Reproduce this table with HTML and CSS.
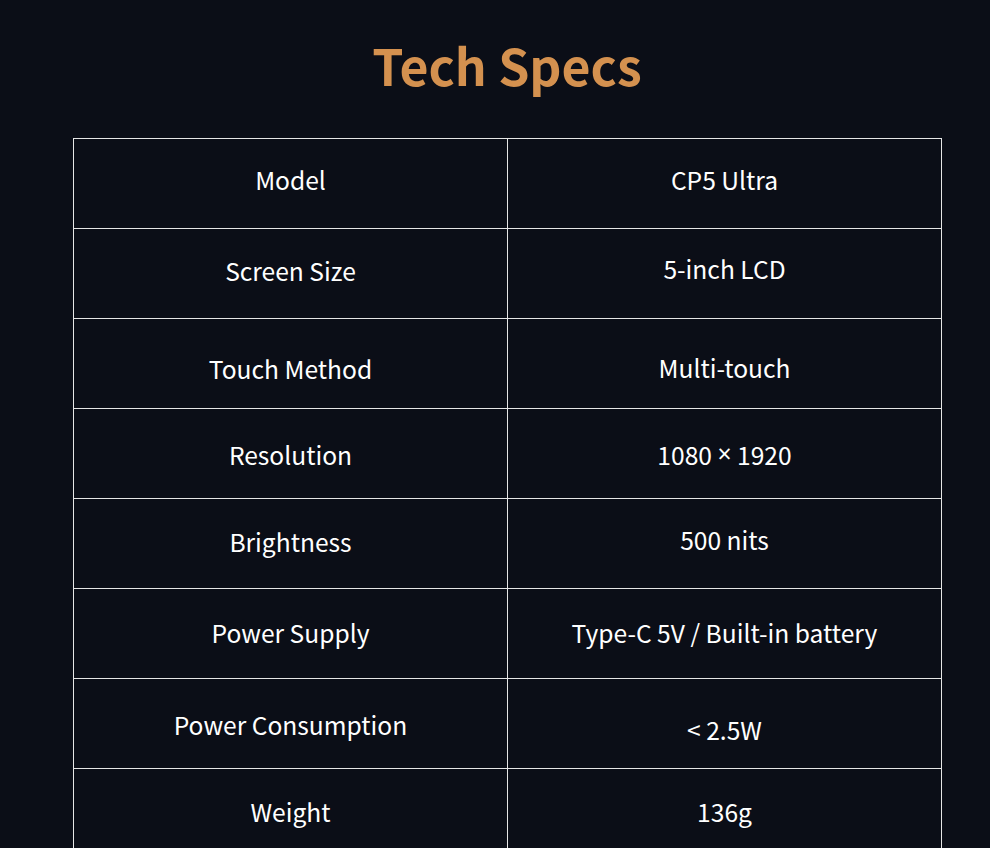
FILE: index.html
```html
<!DOCTYPE html>
<html lang="en">
<head>
<meta charset="utf-8">
<title>Tech Specs</title>
<link rel="stylesheet" href="styles.css">
</head>
<body>
<main class="page">
  <h1 class="title">Tech Specs</h1>
  <div class="specs">
    <div class="cell s-4">Model</div><div class="cell s-4">CP5 Ultra</div>
    <div class="cell s-3">Screen Size</div><div class="cell s-5">5-inch LCD</div>
    <div class="cell s5">Touch Method</div><div class="cell s4">Multi-touch</div>
    <div class="cell s1">Resolution</div><div class="cell s1">1080&nbsp;<span class="times">×</span>&nbsp;1920</div>
    <div class="cell s-2">Brightness</div><div class="cell s-4">500 nits</div>
    <div class="cell s-1">Power Supply</div><div class="cell s-1">Type-C 5V / Built-in battery</div>
    <div class="cell s1">Power Consumption</div><div class="cell s6">&lt; 2.5W</div>
    <div class="cell s-2">Weight</div><div class="cell s-2">136g</div>
  </div>
</main>
</body>
</html>
```

FILE: styles.css
```css
html, body {
  margin: 0;
  padding: 0;
  background: #0b0e17;
}
body {
  font-family: "Noto Sans CJK SC", "Noto Sans", sans-serif;
  color: #ffffff;
}
.page {
  width: 990px;
  height: 848px;
  overflow: hidden;
  box-sizing: border-box;
  padding: 24px 49px 0 73px;
}
.title {
  margin: 0;
  height: 114px;
  text-align: center;
  font-size: 50px;
  font-weight: 700;
  color: #d4914f;
  line-height: 80px;
}
.specs {
  display: grid;
  grid-template-columns: 434px 434px;
  grid-auto-rows: 90px;
  border-top: 1px solid #e6e6e6;
  border-left: 1px solid #e6e6e6;
  width: 868px;
}
.cell {
  display: flex;
  align-items: center;
  justify-content: center;
  white-space: pre;
  border-right: 1px solid #e6e6e6;
  border-bottom: 1px solid #e6e6e6;
  font-size: 24.6px;
  font-weight: 400;
  line-height: 1;
}
.times {
  font-family: "Noto Sans", sans-serif;
}
.s-5 { padding-bottom: 10px; }
.s-4 { padding-bottom: 8px; }
.s-3 { padding-bottom: 6px; }
.s-2 { padding-bottom: 4px; }
.s-1 { padding-bottom: 2px; }
.s1 { padding-top: 2px; }
.s4 { padding-top: 8px; }
.s5 { padding-top: 10px; }
.s6 { padding-top: 12px; }
```
